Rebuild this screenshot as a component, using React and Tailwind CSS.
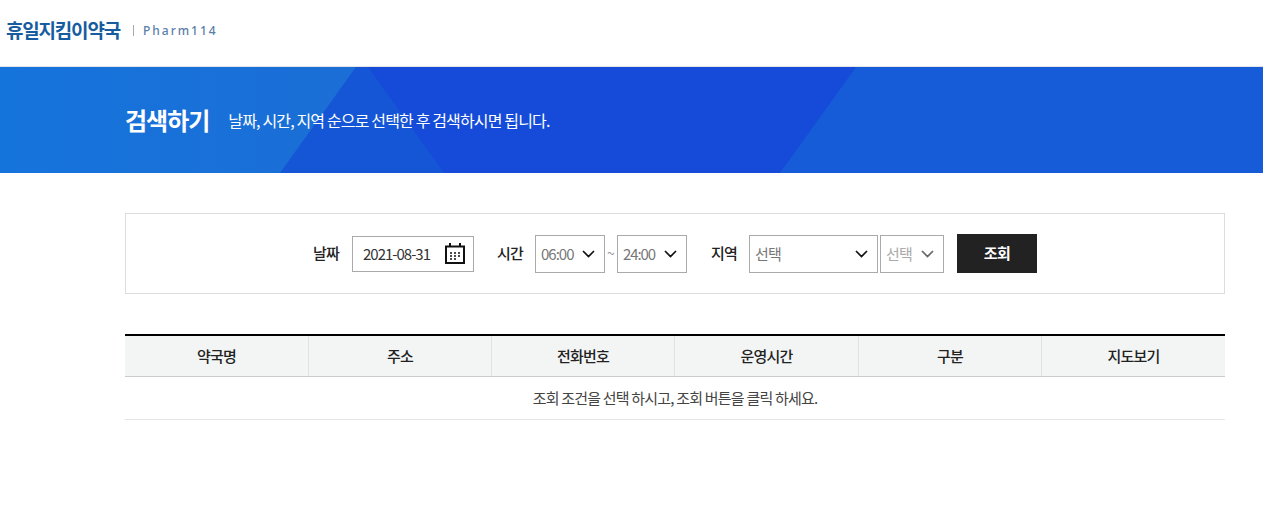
const columns = ['약국명', '주소', '전화번호', '운영시간', '구분', '지도보기'];

const Chevron = ({ color }) => (
  <svg width="13" height="8" viewBox="0 0 13 8" fill="none">
    <path d="M1 1l5.5 5.5L12 1" stroke={color} strokeWidth="1.7" />
  </svg>
);

const Select = ({ label, width, muted, tracking }) => (
  <div className={`flex h-[38px] items-center justify-between border border-[#aaaaaa] pl-[5px] pr-[9px] ${width}`}>
    <span className={`pt-[1px] text-[15px] ${tracking} ${muted ? 'text-[#aaaaaa]' : 'text-[#777777]'}`}>{label}</span>
    <Chevron color={muted ? '#666666' : '#111111'} />
  </div>
);

const CalendarIcon = () => (
  <svg width="20" height="21" viewBox="0 0 20 21" fill="none">
    <rect x="1" y="3.5" width="18" height="16.5" stroke="#111111" strokeWidth="2" />
    <path d="M5 0v4M15 0v4" stroke="#111111" strokeWidth="2" />
    <path d="M5 10h2M9 10h2M13 10h2M5 13h2M9 13h2M13 13h2M5 16h2M9 16h2" stroke="#111111" strokeWidth="1.5" />
  </svg>
);

export default function App() {
  return (
    <div className="min-h-[509px] bg-white font-['Noto_Sans_CJK_KR','Noto_Sans',sans-serif] text-[#222222]">
      {/* Header */}
      <header className="flex h-[67px] items-center border-b border-[#e4e4e4] pb-[5px] pl-[6px]">
        <span className="text-[19px] font-bold tracking-[-1.2px] text-[#165c9e]">휴일지킴이약국</span>
        <span className="ml-[13px] h-[11px] w-px bg-[#aaaaaa]" />
        <span className="ml-[9px] font-['Noto_Sans',sans-serif] text-[12px] font-medium tracking-[2px] text-[#5a7ea8]">Pharm114</span>
      </header>

      {/* Banner */}
      <section className="relative h-[106px] overflow-hidden bg-[#154bd8]">
        <svg className="absolute inset-0 h-full w-full" viewBox="0 0 1263 106" preserveAspectRatio="none">
          <defs>
            <linearGradient id="bannerLeft" x1="0" x2="1" y1="0" y2="0">
              <stop offset="0" stopColor="#1574dc" />
              <stop offset="1" stopColor="#1b6ed6" />
            </linearGradient>
          </defs>
          <polygon points="368,0 444,106 280,106 356,0" fill="#1556d6" />
          <polygon points="0,0 356,0 280,106 0,106" fill="url(#bannerLeft)" />
          <polygon points="856,0 1263,0 1263,106 780,106" fill="#165cd8" />
        </svg>
        <div className="relative flex h-full items-center pb-[1px] pl-[125px] text-white">
          <h1 className="text-[24px] font-bold tracking-[-1px]">검색하기</h1>
          <p className="ml-[19px] text-[16px] tracking-[-0.85px]">날짜, 시간, 지역 순으로 선택한 후 검색하시면 됩니다.</p>
        </div>
      </section>

      <main className="pl-[125px] pr-[38px]">
        {/* Search form */}
        <div className="mt-[40px] flex h-[81px] items-center justify-center border border-[#dddddd] text-[15px]">
          <span className="font-medium tracking-[-0.8px]">날짜</span>
          <div className="ml-[13px] flex h-[36px] w-[122px] items-center justify-between border border-[#aaaaaa] pl-[10px] pr-[8px]">
            <span className="pt-[1px] text-[15px] tracking-[-1px] text-[#333333]">2021-08-31</span>
            <CalendarIcon />
          </div>
          <span className="ml-[23px] font-medium tracking-[-0.8px]">시간</span>
          <div className="ml-[12px]"><Select label="06:00" width="w-[70px]" tracking="tracking-[-1px]" /></div>
          <span className="w-[12px] text-center text-[14px] text-[#999999]">~</span>
          <Select label="24:00" width="w-[70px]" tracking="tracking-[-1.1px]" />
          <span className="ml-[24px] font-medium tracking-[-0.8px]">지역</span>
          <div className="ml-[12px]"><Select label="선택" width="w-[129px]" tracking="tracking-[-0.8px]" /></div>
          <div className="ml-[2px]"><Select label="선택" width="w-[64px]" muted tracking="tracking-[-0.8px]" /></div>
          <button className="ml-[13px] h-[39px] w-[80px] bg-[#222222] text-[15px] font-bold tracking-[-0.5px] text-white">조회</button>
        </div>

        {/* Result table */}
        <div className="mt-[40px] border-t-2 border-black">
          <div className="grid h-[41px] grid-cols-[184px_183px_183px_184px_183px_183px] border-b border-[#cccccc] bg-[#f3f5f5]">
            {columns.map((column, index) => (
              <div
                key={column}
                className={`flex items-center justify-center text-[15px] font-medium tracking-[-0.8px] ${index < 5 ? 'border-r border-[#e2e2e2]' : ''}`}
              >
                {column}
              </div>
            ))}
          </div>
          <div className="flex h-[43px] items-center justify-center border-b border-[#e5e5e5] text-[15px] tracking-[-0.8px] text-[#444444]">
            조회 조건을 선택 하시고, 조회 버튼을 클릭 하세요.
          </div>
        </div>
      </main>
    </div>
  );
}
